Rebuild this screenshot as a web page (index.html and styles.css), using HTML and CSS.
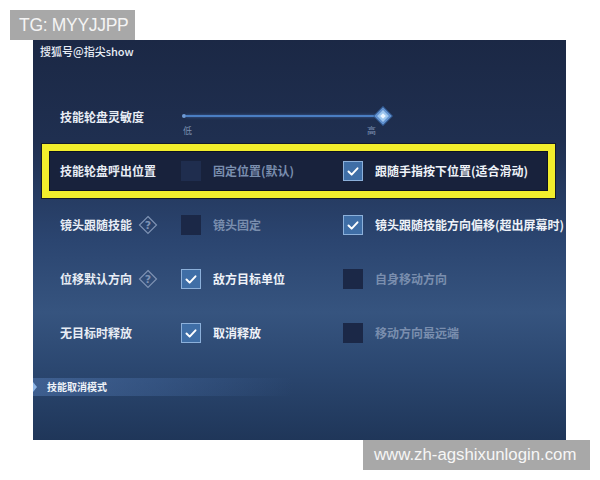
FILE: index.html
```html
<!DOCTYPE html>
<html lang="zh">
<head>
<meta charset="utf-8">
<link rel="stylesheet" href="styles.css">
</head>
<body>
<div class="tag">TG: MYYJJPP</div>
<div class="panel">
  <div class="head">搜狐号@指尖show</div>
  <div class="row">
    <div class="label">技能轮盘灵敏度</div>
    <div class="slider">
      <div class="track">
        <span class="dot"></span>
        <span class="line"></span>
        <span class="knob"><span class="knob-in"></span></span>
      </div>
      <div class="ticks"><span>低</span><span>高</span></div>
    </div>
  </div>
  <div class="row hl">
    <div class="label">技能轮盘呼出位置</div>
    <div class="opt"><span class="box"></span><span class="txt muted">固定位置(默认)</span></div>
    <div class="opt"><span class="box on"><svg viewBox="0 0 20 20"><path d="M5 10.5l3.5 3.5 6.5-7"/></svg></span><span class="txt">跟随手指按下位置(适合滑动)</span></div>
  </div>
  <div class="row">
    <div class="label">镜头跟随技能<svg class="help" viewBox="0 0 20 20"><path d="M10 1.5L18.5 10 10 18.5 1.5 10z"/><text x="10" y="14">?</text></svg></div>
    <div class="opt"><span class="box"></span><span class="txt muted">镜头固定</span></div>
    <div class="opt"><span class="box on"><svg viewBox="0 0 20 20"><path d="M5 10.5l3.5 3.5 6.5-7"/></svg></span><span class="txt">镜头跟随技能方向偏移(超出屏幕时)</span></div>
  </div>
  <div class="row">
    <div class="label">位移默认方向<svg class="help" viewBox="0 0 20 20"><path d="M10 1.5L18.5 10 10 18.5 1.5 10z"/><text x="10" y="14">?</text></svg></div>
    <div class="opt"><span class="box on"><svg viewBox="0 0 20 20"><path d="M5 10.5l3.5 3.5 6.5-7"/></svg></span><span class="txt">敌方目标单位</span></div>
    <div class="opt"><span class="box"></span><span class="txt muted">自身移动方向</span></div>
  </div>
  <div class="row">
    <div class="label">无目标时释放</div>
    <div class="opt"><span class="box on"><svg viewBox="0 0 20 20"><path d="M5 10.5l3.5 3.5 6.5-7"/></svg></span><span class="txt">取消释放</span></div>
    <div class="opt"><span class="box"></span><span class="txt muted">移动方向最远端</span></div>
  </div>
  <div class="section">
    <div class="band"><span class="arrow"></span><span class="stxt">技能取消模式</span></div>
  </div>
</div>
<div class="site">www.zh-agshixunlogin.com</div>
</body>
</html>
```
FILE: styles.css
```css
html, body {
  margin: 0;
  padding: 0;
  background: #ffffff;
}
body {
  width: 600px;
  height: 480px;
  overflow: hidden;
  padding-top: 10px;
  box-sizing: border-box;
  font-family: "Noto Sans CJK SC", "Noto Sans", sans-serif;
}
.tag {
  margin-left: 10px;
  width: 125px;
  height: 30px;
  background: #a8a8a8;
  color: #f4f4f4;
  font-family: "Liberation Sans", Arial, sans-serif;
  font-size: 17.5px;
  line-height: 30px;
  padding-left: 9px;
  box-sizing: border-box;
  letter-spacing: -0.3px;
}
.panel {
  margin-left: 33px;
  width: 533px;
  height: 400px;
  box-sizing: border-box;
  background: linear-gradient(180deg, #1b2845 0%, #1f2f50 25%, #2b4570 50%, #36547f 68%, #2b4770 82%, #1f3659 100%);
  overflow: hidden;
}
.head {
  height: 50px;
  box-sizing: border-box;
  padding: 4px 0 0 7px;
  color: #e9eef6;
  font-size: 11px;
  line-height: 14px;
  font-weight: 500;
}
.row {
  height: 54px;
  box-sizing: border-box;
  margin: 0 11px 0 9px;
  border: 7px solid transparent;
  padding-left: 11px;
  display: grid;
  grid-template-columns: 121px 162px 1fr;
  align-items: center;
  white-space: nowrap;
}
.row.hl {
  border-color: #f2ee2c;
  background: #18223c;
  box-shadow: 0 0 0 1px #151b28, inset 0 0 0 1px #0d1322;
}
.label {
  display: flex;
  align-items: center;
  color: #e8edf5;
  font-size: 12px;
  font-weight: 700;
  line-height: 16px;
}
.help {
  width: 20px;
  height: 20px;
  margin-left: 6px;
}
.help path {
  fill: none;
  stroke: #7e92b3;
  stroke-width: 1.2;
}
.help text {
  fill: #7e92b3;
  font-family: "DejaVu Sans", sans-serif;
  font-size: 11px;
  text-anchor: middle;
}
.opt {
  display: flex;
  align-items: center;
}
.box {
  width: 20px;
  height: 20px;
  box-sizing: border-box;
  background: #1b2847;
  flex: none;
}
.row.hl .box {
  background: #1f2d4e;
}
.row.hl .box.on {
  background: #3f6ea6;
}
.box.on {
  background: #3f6ea6;
  border: 1px solid #8cb0da;
}
.box svg {
  display: block;
  width: 18px;
  height: 18px;
}
.box svg path {
  fill: none;
  stroke: #ffffff;
  stroke-width: 2.2;
  stroke-linecap: round;
  stroke-linejoin: round;
}
.txt {
  margin-left: 12px;
  color: #eef2f8;
  font-size: 12px;
  font-weight: 700;
  line-height: 16px;
}
.txt.muted {
  color: #7a8eae;
}
.slider {
  grid-column: 2 / 4;
  width: 210px;
  margin-top: 10px;
  margin-left: 1px;
}
.track {
  height: 18px;
  display: flex;
  align-items: center;
}
.dot {
  width: 4px;
  height: 4px;
  border-radius: 50%;
  background: #6f9bd6;
  flex: none;
}
.line {
  flex: 1;
  height: 2px;
  background: #4a7ec2;
  box-shadow: 0 0 3px rgba(90, 140, 210, 0.6);
}
.knob {
  width: 18px;
  height: 18px;
  flex: none;
  display: flex;
  align-items: center;
  justify-content: center;
  margin-left: -2px;
}
.knob-in {
  width: 12px;
  height: 12px;
  transform: rotate(45deg);
  background: #eaf4ff;
  border: 2px solid #5d8fcf;
  box-sizing: border-box;
  outline: 1px solid #3a67a4;
  box-shadow: inset 0 0 0 2px #9cc6f0;
}
.ticks {
  height: 12px;
  display: flex;
  justify-content: space-between;
  padding: 0 16px 0 1px;
  color: #7b8eae;
  font-size: 9px;
  line-height: 12px;
}
.section {
  height: 54px;
  display: flex;
  align-items: center;
}
.band {
  width: 260px;
  height: 18px;
  display: flex;
  align-items: center;
  background: linear-gradient(90deg, rgba(90, 130, 190, 0.45) 0%, rgba(80, 120, 180, 0.28) 50%, rgba(70, 110, 170, 0) 100%);
}
.arrow {
  width: 0;
  height: 0;
  border-top: 5px solid transparent;
  border-bottom: 5px solid transparent;
  border-left: 4px solid #8fb6e6;
  flex: none;
}
.stxt {
  margin-left: 10px;
  color: #eef2f8;
  font-size: 10px;
  font-weight: 700;
  line-height: 14px;
}
.site {
  margin-left: 363px;
  width: 227px;
  height: 30px;
  background: #a8a8a8;
  color: #f6f6f6;
  font-family: "Liberation Sans", Arial, sans-serif;
  font-size: 16.8px;
  line-height: 30px;
  padding-left: 11px;
  box-sizing: border-box;
  white-space: nowrap;
}
```
